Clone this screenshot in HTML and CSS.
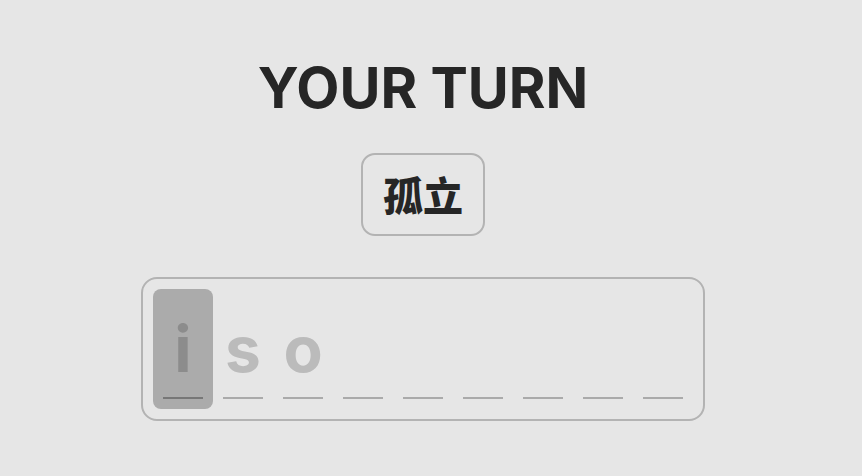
FILE: index.html
```html
<!DOCTYPE html>
<html lang="en">
<head>
<meta charset="utf-8">
<title>Your Turn</title>
<link rel="stylesheet" href="styles.css">
</head>
<body>
<main class="page">
  <h1 class="title">YOUR TURN</h1>
  <div class="prompt"><span lang="zh">孤立</span></div>
  <div class="answer">
    <div class="slot active"><span class="ch">i</span><span class="line"></span></div>
    <div class="slot"><span class="ch">s</span><span class="line"></span></div>
    <div class="slot"><span class="ch">o</span><span class="line"></span></div>
    <div class="slot"><span class="ch"></span><span class="line"></span></div>
    <div class="slot"><span class="ch"></span><span class="line"></span></div>
    <div class="slot"><span class="ch"></span><span class="line"></span></div>
    <div class="slot"><span class="ch"></span><span class="line"></span></div>
    <div class="slot"><span class="ch"></span><span class="line"></span></div>
    <div class="slot"><span class="ch"></span><span class="line"></span></div>
  </div>
</main>
</body>
</html>
```
FILE: styles.css
```css
html, body {
  margin: 0;
  padding: 0;
  background: #e6e6e6;
}
body {
  width: 862px;
  height: 476px;
  overflow: hidden;
  font-family: Inter, "Liberation Sans", sans-serif;
}
.page {
  width: 846px;
  display: flex;
  flex-direction: column;
  align-items: center;
  padding-top: 60px;
}
.title {
  margin: 0;
  font-size: 56px;
  line-height: 56px;
  font-weight: 700;
  color: #262626;
  letter-spacing: 0;
}
.prompt {
  margin-top: 37px;
  border: 2px solid #b3b3b3;
  border-radius: 14px;
  padding: 18px 20px;
  font-family: "Noto Sans CJK SC", sans-serif;
  font-weight: 900;
  font-size: 40px;
  line-height: 43px;
  color: #262626;
}
.answer {
  margin-top: 41px;
  display: flex;
  border: 2px solid #b3b3b3;
  border-radius: 16px;
  padding: 10px;
}
.slot {
  width: 60px;
  height: 120px;
  box-sizing: border-box;
  padding-top: 11px;
  display: flex;
  flex-direction: column;
  align-items: center;
  border-radius: 8px;
}
.slot.active {
  background: #ababab;
}
.ch {
  height: 97px;
  font-size: 64px;
  line-height: 97px;
  font-weight: 700;
  color: #bbbbbb;
}
.active .ch {
  color: #8c8c8c;
}
.line {
  width: 40px;
  height: 2px;
  background: #aaaaaa;
}
.active .line {
  background: #777777;
}
```
